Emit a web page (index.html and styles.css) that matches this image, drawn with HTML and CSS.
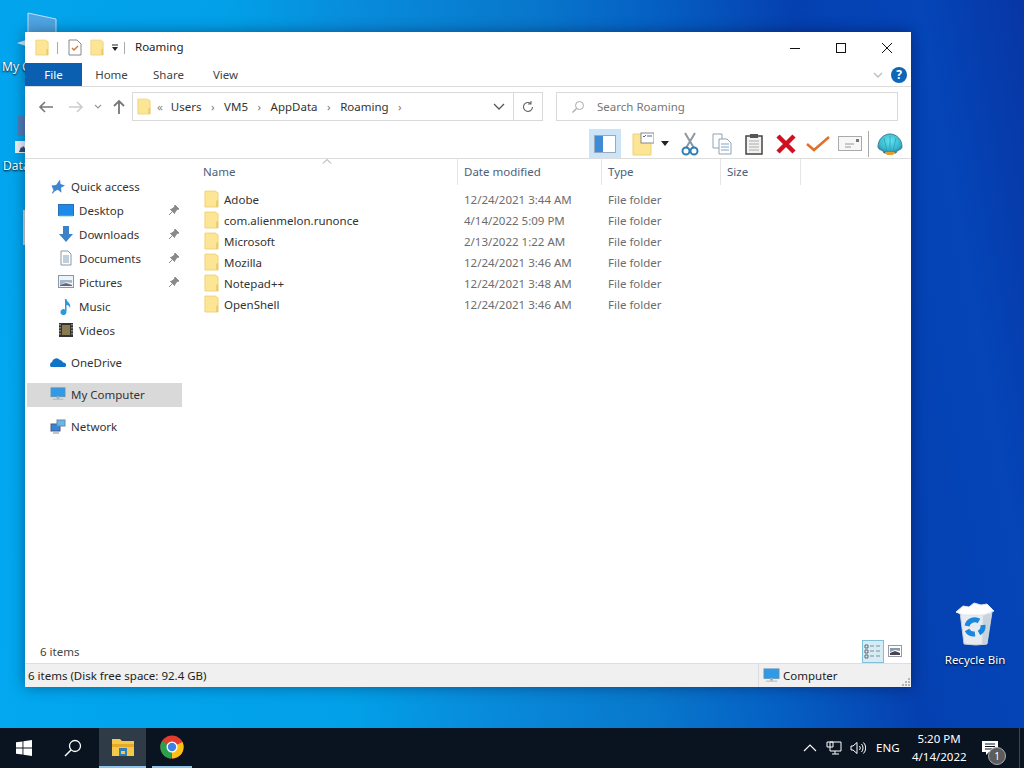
FILE: index.html
```html
<!DOCTYPE html>
<html lang="en">
<head>
  <meta charset="UTF-8">
  <title>Roaming</title>
  <link rel="stylesheet" href="styles.css">
</head>
<body>
  <svg class="defs" width="0" height="0">
    <defs>
      <radialGradient id="shell-fill" cx="50%" cy="35%" r="70%">
        <stop offset="0" stop-color="#5fe6ee"/>
        <stop offset=".7" stop-color="#35b4cc"/>
        <stop offset="1" stop-color="#2a6f92"/>
      </radialGradient>
    </defs>
    <symbol id="folder" viewBox="0 0 16 20">
      <path d="M1 1h11l3 2v15H1z" fill="#fce595" stroke="#efd27a"/>
      <path d="M13 11h2v7h-2z" fill="#ecca6c"/>
    </symbol>
    <symbol id="pin" viewBox="0 0 12 12">
      <path d="M7 1l4 4-2 .5L7 8 6.500 9.500 2.500 5.500 4 5l2.500-2z M4 8l-3 3" fill="#8a8a8a" stroke="#8a8a8a"/>
    </symbol>
    <symbol id="monitor" viewBox="0 0 18 16">
      <rect x="1" y="1" width="16" height="10" fill="#2f9be8" stroke="#5e8fb0"/>
      <path d="M8 11h2v2H8zM3 14h12" fill="#8aa" stroke="#9fb4c2"/>
    </symbol>
  </svg>

  <div class="desk-icon my-computer">
    <svg width="34" height="24" viewBox="0 0 34 24"><path d="M2 2l28 6v16H2z" fill="#4ea6e4" stroke="#bfe0f5"/></svg>
    <span>My C</span>
  </div>
  <svg class="desk-arrow" width="9" height="6" viewBox="0 0 9 6"><path d="M0 3l9-3v6z" fill="#cfe8f8"/></svg>
  <div class="desk-icon data-icon">
    <svg width="11" height="38" viewBox="0 0 11 38"><path d="M3 0h8v20H3z" fill="#7a6aa0" opacity=".65"/><rect x="0" y="25" width="11" height="12" fill="#eef3f8"/><path d="M4 36l2-5 1 1 1-2 3 3v3z" fill="#2a5280"/></svg>
    <span>Data</span>
  </div>
  <div class="desk-edge"></div>
  <div class="desk-icon recycle">
    <svg width="42" height="44" viewBox="0 0 42 44">
      <path d="M2 10l4 0 4 32q12 2 23 0l5-32z" fill="#e6ebf0" stroke="#c3ced8"/>
      <path d="M29 12h8l-4 30-5 1z" fill="#c9d3dc"/>
      <path d="M2 10l7-6 6 1 5-4 7 2 6-1 7 7-10 4H9z" fill="#fff" stroke="#dfe5ea"/>
      <path d="M13 24a8 8 0 0 1 12-5" fill="none" stroke="#1a86dc" stroke-width="5"/>
      <path d="M29 23a8 8 0 0 1-4 8" fill="none" stroke="#1a86dc" stroke-width="5"/>
      <path d="M21 32a8 8 0 0 1-8-4" fill="none" stroke="#1a86dc" stroke-width="5"/>
    </svg>
    <span>Recycle Bin</span>
  </div>

  <div class="window">
    <div class="titlebar">
      <svg class="ic-qa" width="14" height="18"><use href="#folder"/></svg>
      <i class="qa-sep"></i>
      <svg width="14" height="17" viewBox="0 0 14 17" class="ic-props"><path d="M1 1h8l4 4v11H1z" fill="#fff" stroke="#888"/><path d="M4 9l2 2 4-4" fill="none" stroke="#c8743a" stroke-width="1.300"/></svg>
      <svg class="ic-qa2" width="14" height="18"><use href="#folder"/></svg>
      <svg class="qa-drop" width="8" height="8" viewBox="0 0 8 8"><path d="M1 1h6" stroke="#222"/><path d="M1 3h6L4 7z" fill="#222"/></svg>
      <i class="qa-sep"></i>
      <span class="title-text">Roaming</span>
      <div class="win-btns">
        <svg width="12" height="12" viewBox="0 0 12 12"><path d="M1 6.500h10" stroke="#111"/></svg>
        <svg width="12" height="12" viewBox="0 0 12 12"><rect x="1.500" y="1.500" width="9" height="9" fill="none" stroke="#111"/></svg>
        <svg width="12" height="12" viewBox="0 0 12 12"><path d="M1 1l10 10M11 1L1 11" stroke="#111"/></svg>
      </div>
    </div>

    <div class="tabs">
      <div class="tab file">File</div>
      <div class="tab">Home</div>
      <div class="tab">Share</div>
      <div class="tab">View</div>
      <svg class="ribbon-chev" width="12" height="8" viewBox="0 0 12 8"><path d="M2 2l4 4 4-4" fill="none" stroke="#bbb" stroke-width="1.300"/></svg>
      <div class="help">?</div>
    </div>

    <div class="addressrow">
      <svg class="nav-arrow" width="16" height="14" viewBox="0 0 16 14"><path d="M15 7H2M7 2L2 7l5 5" fill="none" stroke="#777" stroke-width="1.600"/></svg>
      <svg class="nav-arrow fwd" width="16" height="14" viewBox="0 0 16 14"><path d="M1 7h13M9 2l5 5-5 5" fill="none" stroke="#ccc" stroke-width="1.600"/></svg>
      <svg class="nav-recent" width="8" height="6" viewBox="0 0 8 6"><path d="M1 1l3 3 3-3" fill="none" stroke="#999" stroke-width="1.200"/></svg>
      <svg class="nav-up" width="14" height="16" viewBox="0 0 14 16"><path d="M7 15V2M2 7l5-5 5 5" fill="none" stroke="#777" stroke-width="1.800"/></svg>
      <div class="addressbox">
        <svg class="addr-folder" width="14" height="18"><use href="#folder"/></svg>
        <span class="crumb-more">&laquo;</span>
        <span class="crumb">Users</span><b class="gt">&rsaquo;</b>
        <span class="crumb">VM5</span><b class="gt">&rsaquo;</b>
        <span class="crumb">AppData</span><b class="gt">&rsaquo;</b>
        <span class="crumb">Roaming</span><b class="gt">&rsaquo;</b>
        <svg class="addr-drop" width="12" height="8" viewBox="0 0 12 8"><path d="M1 1l5 5 5-5" fill="none" stroke="#555" stroke-width="1.300"/></svg>
        <div class="refresh">
          <svg width="14" height="14" viewBox="0 0 14 14"><path d="M11.500 7a4.500 4.500 0 1 1-1.500-3.400M10 1v3H7" fill="none" stroke="#666" stroke-width="1.100"/></svg>
        </div>
      </div>
      <div class="searchbox">
        <svg width="14" height="14" viewBox="0 0 14 14"><circle cx="8.500" cy="5.500" r="4" fill="none" stroke="#aaa"/><path d="M5.500 8.500L1.500 12.500" stroke="#aaa" stroke-width="1.300"/></svg>
        <span>Search Roaming</span>
      </div>
    </div>

    <div class="toolbar">
      <div class="tool pane-btn">
        <svg width="22" height="18" viewBox="0 0 22 18"><rect x=".5" y=".5" width="21" height="17" fill="#fff" stroke="#9ab"/><rect x="1" y="1" width="8" height="16" fill="#3f8bd8"/></svg>
      </div>
      <div class="tool-layout">
        <svg width="22" height="24" viewBox="0 0 22 24"><path d="M1 2h12l6 4v17H1z" fill="#fce595" stroke="#efd27a"/><rect x="9" y="1" width="13" height="10" fill="#fff" stroke="#888"/><path d="M11 4l1 1 2-2M15 4h5" fill="none" stroke="#46a"/></svg>
        <svg width="8" height="5" viewBox="0 0 8 5"><path d="M0 0h8L4 5z" fill="#222"/></svg>
      </div>
      <div class="tool">
        <svg width="18" height="24" viewBox="0 0 18 24"><path d="M4 1l9 15M14 1L5 16" stroke="#8a96a0" stroke-width="2"/><circle cx="5" cy="19" r="3.500" fill="none" stroke="#2d7fb8" stroke-width="2"/><circle cx="13" cy="19" r="3.500" fill="none" stroke="#2d7fb8" stroke-width="2"/></svg>
      </div>
      <div class="tool">
        <svg width="20" height="22" viewBox="0 0 20 22"><path d="M1 1h9v14H1z" fill="#fff" stroke="#8fa3b5"/><path d="M7 6h8l4 4v11H7z" fill="#fff" stroke="#8fa3b5"/><path d="M9 11h8M9 14h8M9 17h8" stroke="#7fa3c5"/></svg>
      </div>
      <div class="tool">
        <svg width="18" height="22" viewBox="0 0 18 22"><rect x="1" y="3" width="16" height="18" fill="#f2f2f0" stroke="#444" stroke-width="1.500"/><rect x="5" y="1" width="8" height="4" fill="#555"/><path d="M4 8h10M4 11h10M4 14h10M4 17h10" stroke="#aaa"/></svg>
      </div>
      <div class="tool">
        <svg width="20" height="20" viewBox="0 0 20 20"><path d="M2 2l16 16M18 2L2 18" stroke="#d01020" stroke-width="4.500"/></svg>
      </div>
      <div class="tool">
        <svg width="24" height="18" viewBox="0 0 24 18"><path d="M1 9l7 6L23 2" fill="none" stroke="#e0702a" stroke-width="2.500"/></svg>
      </div>
      <div class="tool">
        <svg width="24" height="16" viewBox="0 0 24 16"><rect x=".5" y=".5" width="23" height="14" fill="#f7f7f7" stroke="#aaa"/><path d="M7 8h9M7 11h6" stroke="#999"/><rect x="18" y="3" width="3" height="3" fill="#777"/></svg>
      </div>
      <i class="tool-sep"></i>
      <div class="tool">
        <svg width="26" height="22" viewBox="0 0 26 22"><path d="M1 14C1 6 7 1 13 1s12 5 12 13c0 2-3 3-5 4l-1 2H7l-1-2c-2-1-5-2-5-4z" fill="url(#shell-fill)" stroke="#3f7f96"/><path d="M8 19h10l-2 3h-6z" fill="#e0a030"/><path d="M13 3v15M7 5l3 13M19 5l-3 13" fill="none" stroke="#2fa0b8" stroke-width=".8"/></svg>
      </div>
    </div>

    <div class="main">
      <nav class="sidebar">
        <div class="nav-item top"><svg width="15" height="15" viewBox="0 0 15 15"><path d="M9.500 .5l.5 4.500 4.500 1.500-4 2.300 .5 5-3.800-3-3.700 2-1 2-1-1 1.500-2.500L1 6.500l4.600-.5z" fill="#3d86d0"/></svg>Quick access</div>
        <div class="nav-item"><svg width="16" height="13" viewBox="0 0 16 13"><rect x=".5" y=".5" width="15" height="11" fill="#1c8ae8" stroke="#2a6fb0"/><path d="M1 12h14" stroke="#8cb"/></svg>Desktop<svg class="pin" width="12" height="12"><use href="#pin"/></svg></div>
        <div class="nav-item"><svg width="16" height="16" viewBox="0 0 16 16"><path d="M5 0h6v8h4l-7 8-7-8h4z" fill="#3d82c8"/></svg>Downloads<svg class="pin" width="12" height="12"><use href="#pin"/></svg></div>
        <div class="nav-item"><svg width="16" height="16" viewBox="0 0 16 16"><path d="M3 1h7l3 3v11H3z" fill="#fff" stroke="#8898a8"/><path d="M5 6h6M5 8h6M5 10h6M5 12h6" stroke="#7f9fb8"/></svg>Documents<svg class="pin" width="12" height="12"><use href="#pin"/></svg></div>
        <div class="nav-item"><svg width="16" height="14" viewBox="0 0 16 14"><rect x=".5" y=".5" width="15" height="12" fill="#eef3f7" stroke="#8898a8"/><path d="M2 5h12v3L8 7l-6 3z" fill="#9fb8cc"/><path d="M2 10l6-2 6 2v1H2z" fill="#667"/></svg>Pictures<svg class="pin" width="12" height="12"><use href="#pin"/></svg></div>
        <div class="nav-item"><svg width="16" height="17" viewBox="0 0 16 17"><path d="M7 1h1.500c0 3 5 4 3.500 9-.5-2-2-3-3.500-3v7a3 3 0 1 1-1.500-2.500z" fill="#2a9bd8"/></svg>Music</div>
        <div class="nav-item"><svg width="16" height="16" viewBox="0 0 16 16"><rect x="1" y="1" width="14" height="14" fill="#333"/><path d="M4 3h8v10H4z" fill="#8a7a50"/><path d="M2 2v12M14 2v12" stroke="#ccc" stroke-dasharray="1.500 1.500"/></svg>Videos</div>
        <div class="nav-item top gap"><svg width="16" height="11" viewBox="0 0 16 11"><path d="M1 10a3 3 0 0 1 1-5 4.500 4.500 0 0 1 8-2 3.500 3.500 0 0 1 3 2.500A2.500 2.500 0 0 1 15 10z" fill="#0f73c8"/></svg>OneDrive</div>
        <div class="nav-item top gap selected"><svg width="16" height="14"><use href="#monitor"/></svg>My Computer</div>
        <div class="nav-item top gap"><svg width="16" height="16" viewBox="0 0 16 16"><rect x="1" y="6" width="9" height="7" fill="#2f88d0" stroke="#558"/><rect x="7" y="2" width="8" height="6" fill="#68b8e8" stroke="#68a"/><path d="M3 15h6" stroke="#889"/></svg>Network</div>
      </nav>

      <div class="content">
        <div class="list">
          <div class="cols head">
            <div>Name</div>
            <div>Date modified</div>
            <div>Type</div>
            <div>Size</div>
          </div>
          <svg class="sort" width="10" height="5" viewBox="0 0 10 5"><path d="M1 4.500l4-4 4 4" fill="none" stroke="#999"/></svg>
          <div class="rows">
            <div class="cols row"><div class="name"><svg width="15" height="19"><use href="#folder"/></svg>Adobe</div><div>12/24/2021 3:44 AM</div><div>File folder</div></div>
            <div class="cols row"><div class="name"><svg width="15" height="19"><use href="#folder"/></svg>com.alienmelon.runonce</div><div>4/14/2022 5:09 PM</div><div>File folder</div></div>
            <div class="cols row"><div class="name"><svg width="15" height="19"><use href="#folder"/></svg>Microsoft</div><div>2/13/2022 1:22 AM</div><div>File folder</div></div>
            <div class="cols row"><div class="name"><svg width="15" height="19"><use href="#folder"/></svg>Mozilla</div><div>12/24/2021 3:46 AM</div><div>File folder</div></div>
            <div class="cols row"><div class="name"><svg width="15" height="19"><use href="#folder"/></svg>Notepad++</div><div>12/24/2021 3:48 AM</div><div>File folder</div></div>
            <div class="cols row"><div class="name"><svg width="15" height="19"><use href="#folder"/></svg>OpenShell</div><div>12/24/2021 3:46 AM</div><div>File folder</div></div>
          </div>
        </div>
      </div>
    </div>

    <div class="footer">
      <span>6 items</span>
      <div class="view-btn on">
        <svg width="18" height="16" viewBox="0 0 18 16"><path d="M1 2h3v3H1zM1 7h3v3H1zM1 12h3v3H1z" fill="none" stroke="#667"/><path d="M6 3h4M12 3h4M6 8h4M12 8h4M6 13h4M12 13h4" stroke="#889"/></svg>
      </div>
      <svg class="view-large" width="14" height="12" viewBox="0 0 14 12"><rect x=".5" y=".5" width="13" height="11" fill="#fff" stroke="#99a"/><path d="M2 3h10v3l-5-1-5 2z" fill="#89a"/><path d="M2 8l5-2 5 2v2H2z" fill="#445"/></svg>
    </div>

    <div class="statusbar">
      <span>6 items (Disk free space: 92.4 GB)</span>
      <div class="status-comp"><svg width="17" height="15"><use href="#monitor"/></svg>Computer</div>
      <svg class="grip" width="8" height="8" viewBox="0 0 8 8"><path d="M6 0h2v2H6zM3 3h2v2H3zM6 3h2v2H6zM0 6h2v2H0zM3 6h2v2H3zM6 6h2v2H6z" fill="#b5b5b5"/></svg>
    </div>
  </div>

  <div class="taskbar">
    <div class="tb-btn start">
      <svg width="16" height="16" viewBox="0 0 16 16"><path d="M0 2.300L6.500 1.400v6.200H0zM7.400 1.300L16 0v7.600H7.400zM0 8.400h6.500v6.200L0 13.700zM7.400 8.400H16V16l-8.600-1.300z" fill="#fff"/></svg>
    </div>
    <div class="tb-btn search">
      <svg width="18" height="18" viewBox="0 0 18 18"><circle cx="11" cy="7" r="5.500" fill="none" stroke="#fff" stroke-width="1.300"/><path d="M7 11l-6 6" stroke="#fff" stroke-width="1.500"/></svg>
    </div>
    <div class="tb-btn app active">
      <svg width="22" height="18" viewBox="0 0 22 18"><path d="M0 1h8l2 2h12v15H0z" fill="#f4c84a"/><path d="M0 6h22v3H0z" fill="#e5a92c"/><path d="M7 10h8v8H7z" fill="#2f7fb8"/><path d="M9 13h4v3H9z" fill="#f4c84a"/></svg>
    </div>
    <div class="tb-btn app running">
      <svg width="24" height="24" viewBox="0 0 24 24"><circle cx="12" cy="12" r="11.500" fill="#e33b2e"/><path d="M12 12L22.500 7A11.500 11.500 0 0 1 12 23.500z" fill="#fbc116"/><path d="M12 12l-1 11.500A11.500 11.500 0 0 1 2 6z" fill="#2ba14b"/><circle cx="12" cy="12" r="5.500" fill="#fff"/><circle cx="12" cy="12" r="4.200" fill="#3f7fe8"/></svg>
    </div>
    <div class="tray">
      <svg width="14" height="8" viewBox="0 0 14 8"><path d="M1 7l6-6 6 6" fill="none" stroke="#fff" stroke-width="1.100"/></svg>
      <svg class="tray-net" width="16" height="14" viewBox="0 0 16 14"><path d="M4 1h11v9H4zM9 10v3M6 13h7M1 1h6v5H1z" fill="#0b1622" stroke="#fff"/></svg>
      <svg class="tray-vol" width="16" height="14" viewBox="0 0 16 14"><path d="M1 5h2l4-3.500v11L3 9H1zM9.500 5a3 3 0 0 1 0 4M11.500 3a6 6 0 0 1 0 8M13.500 1.500a8 8 0 0 1 0 11" fill="none" stroke="#fff"/></svg>
      <span class="lang">ENG</span>
      <div class="clock"><div>5:20 PM</div><div>4/14/2022</div></div>
      <div class="notif">
        <svg width="18" height="16" viewBox="0 0 18 16"><path d="M1 1h16v11H8l-3 3v-3H1z" fill="#fff"/><path d="M4 4h10M4 6.500h10M4 9h7" stroke="#0b1622"/></svg>
        <span class="badge">1</span>
      </div>
    </div>
    <i class="show-desktop"></i>
  </div>
</body>
</html>
```

FILE: styles.css
```css
html, body {
  height: 100%;
}

body {
  margin: 0;
  width: 1024px;
  height: 768px;
  overflow: hidden;
  position: relative;
  font-family: "Noto Sans", "Open Sans", sans-serif;
  font-size: 11.5px;
  color: #333;
  background: linear-gradient(80deg, #02a8f0 0%, #02a0e8 31%, #088cdc 42%, #0878cc 57%, #0560c4 68%, #0540b0 80%, #0445b8 91%, #0836a4 100%);
}

.defs {
  position: absolute;
}

svg {
  flex: none;
  display: block;
}

/* desktop icons */
.desk-icon {
  position: absolute;
  display: flex;
  flex-direction: column;
  color: #fff;
  text-shadow: 0 1px 2px #000;
  font-size: 12px;
}

.my-computer {
  left: 26px;
  top: 11px;
}

.my-computer span {
  position: absolute;
  left: -24px;
  top: 47px;
  white-space: nowrap;
}

.desk-arrow {
  position: absolute;
  left: 17px;
  top: 40px;
}

.data-icon {
  left: 15px;
  top: 116px;
}

.data-icon span {
  margin-top: 3px;
  margin-left: -12px;
}

.desk-edge {
  position: absolute;
  left: 23px;
  top: 210px;
  width: 2px;
  height: 35px;
  background: #c9d4da;
}

.recycle {
  left: 945px;
  top: 602px;
  width: 60px;
  align-items: center;
}

.recycle span {
  margin-top: 6px;
  white-space: nowrap;
  font-size: 11.5px;
}

/* explorer window */
.window {
  position: absolute;
  left: 25px;
  top: 32px;
  width: 886px;
  height: 655px;
  background: #fff;
  display: flex;
  flex-direction: column;
  box-shadow: 0 0 14px rgba(0, 0, 30, 0.4);
}

.titlebar {
  height: 31px;
  flex: none;
  display: flex;
  align-items: center;
  padding-left: 10px;
  color: #222;
}

.title-text {
  margin-top: -2px;
}

.qa-sep {
  width: 1px;
  height: 12px;
  background: #aaa;
  margin: 0 10px 0 8px;
}

.ic-qa2 {
  margin-left: 8px;
}

.qa-drop {
  margin-left: 7px;
  margin-right: -3px;
}

.win-btns {
  margin-left: auto;
  display: flex;
  gap: 34px;
  padding-right: 18px;
}

.tabs {
  height: 24px;
  flex: none;
  box-sizing: border-box;
  display: flex;
  align-items: center;
  border-bottom: 1px solid #dcdcdc;
  padding-right: 4px;
}

.tab {
  width: 57px;
  text-align: center;
  color: #444;
}

.tab.file {
  width: 57px;
  height: 23px;
  line-height: 23px;
  margin-right: 1px;
  background: #0a5fb0;
  color: #fff;
}

.ribbon-chev {
  margin-left: auto;
  margin-right: 7px;
}

.help {
  width: 16px;
  height: 16px;
  border-radius: 50%;
  background: #0d66b8;
  color: #fff;
  font-weight: 700;
  font-size: 12px;
  line-height: 16px;
  text-align: center;
}

.addressrow {
  height: 42px;
  flex: none;
  display: flex;
  align-items: center;
  padding-left: 13px;
  padding-bottom: 3px;
  box-sizing: border-box;
}

.nav-arrow.fwd {
  margin-left: 14px;
}

.nav-recent {
  margin-left: 10px;
}

.nav-up {
  margin-left: 10px;
}

.addressbox {
  margin-left: 6px;
  width: 411px;
  height: 29px;
  box-sizing: border-box;
  border: 1px solid #d9d9d9;
  display: flex;
  align-items: center;
  padding-left: 4px;
  color: #333;
}

.crumb-more {
  margin: 0 8px 0 6px;
  color: #888;
}

.gt {
  margin: 0 9.500px;
  color: #777;
  font-weight: 400;
}

.addr-drop {
  margin-left: auto;
  margin-right: 8px;
}

.refresh {
  height: 100%;
  width: 28px;
  border-left: 1px solid #d9d9d9;
  display: flex;
  align-items: center;
  justify-content: center;
}

.searchbox {
  margin-left: 13px;
  width: 342px;
  height: 29px;
  box-sizing: border-box;
  border: 1px solid #d9d9d9;
  display: flex;
  align-items: center;
  gap: 12px;
  padding-left: 14px;
  color: #777;
}

.toolbar {
  height: 30px;
  flex: none;
  display: flex;
  align-items: center;
  justify-content: flex-end;
  padding-right: 5px;
  box-sizing: border-box;
  border-bottom: 1px solid #dcdcdc;
}

.tool {
  width: 32px;
  height: 29px;
  display: flex;
  align-items: center;
  justify-content: center;
}

.pane-btn {
  background: #cce4f7;
  margin-right: 5px;
}

.tool-layout {
  width: 48px;
  box-sizing: border-box;
  padding-left: 6px;
  display: flex;
  align-items: center;
  gap: 7px;
}

.tool-sep {
  width: 1px;
  height: 26px;
  background: #aaa;
  margin: 0 5px 0 2px;
}

.main {
  flex: 1;
  display: flex;
  min-height: 0;
}

.sidebar {
  width: 158px;
  flex: none;
  padding-top: 16px;
  box-sizing: border-box;
  color: #333;
}

.nav-item {
  height: 24px;
  box-sizing: border-box;
  display: flex;
  align-items: center;
  gap: 5px;
  padding-left: 33px;
  padding-right: 3px;
  padding-bottom: 2px;
}

.nav-item svg:first-child {
  width: 16px;
}

.nav-item.top {
  padding-left: 25px;
}

.nav-item.gap {
  margin-top: 8px;
}

.nav-item.selected {
  background: #d9d9d9;
  margin-left: 2px;
  margin-right: 1px;
  padding-left: 23px;
}

.pin {
  margin-left: auto;
}

.content {
  flex: 1;
  min-width: 0;
}

.list {
  position: relative;
}

.cols {
  display: grid;
  grid-template-columns: 255px 144px 119px 80px;
  padding-left: 20px;
}

.head {
  height: 26px;
  color: #4c607a;
}

.head div {
  display: flex;
  align-items: center;
  border-right: 1px solid #e5e5e5;
  padding-bottom: 2px;
}

.head div + div {
  padding-left: 6px;
}

.sort {
  position: absolute;
  left: 139px;
  top: 0;
}

.rows {
  padding-top: 5px;
}

.row {
  height: 21px;
  box-sizing: border-box;
  padding-bottom: 2px;
  align-items: center;
  color: #6d6d6d;
}

.row div + div {
  padding-left: 6px;
}

.row .name {
  display: flex;
  align-items: center;
  gap: 5px;
  padding-left: 1px;
  color: #333;
}

.footer {
  height: 24px;
  flex: none;
  display: flex;
  align-items: center;
  padding-left: 15px;
  padding-right: 9px;
  box-sizing: border-box;
  color: #444;
}

.view-btn {
  margin-left: auto;
  width: 22px;
  height: 23px;
  box-sizing: border-box;
  background: #d5ecf5;
  border: 1px solid #7fc0d8;
  display: flex;
  align-items: center;
  justify-content: center;
}

.view-large {
  margin-left: 4px;
}

.statusbar {
  height: 24px;
  flex: none;
  background: #f0f0f0;
  border-top: 1px solid #dedede;
  box-sizing: border-box;
  display: flex;
  align-items: center;
  padding-left: 3px;
  color: #222;
}

.status-comp {
  margin-left: auto;
  width: 153px;
  height: 100%;
  box-sizing: border-box;
  border-left: 1px solid #ddd;
  display: flex;
  align-items: center;
  gap: 3px;
  padding-left: 4px;
}

.grip {
  position: absolute;
  right: 1px;
  bottom: 1px;
}

/* taskbar */
.taskbar {
  position: absolute;
  left: 0;
  bottom: 0;
  width: 1024px;
  height: 40px;
  background: #0a1420;
  display: flex;
  color: #fff;
}

.tb-btn {
  height: 40px;
  box-sizing: border-box;
  display: flex;
  align-items: center;
  justify-content: center;
}

.start {
  width: 48px;
}

.search {
  width: 50px;
}

.app {
  width: 47px;
  border-bottom: 2px solid transparent;
}

.active {
  margin-left: 1px;
  background: #2f3c48;
  border-bottom-color: #8fc4ea;
}

.running {
  margin-left: 6px;
  width: 40px;
  border-bottom-color: #8fc4ea;
}

.tray {
  position: absolute;
  right: 23px;
  top: 0;
  height: 40px;
  display: flex;
  align-items: center;
}

.tray-net {
  margin-left: 9px;
}

.tray-vol {
  margin-left: 8px;
}

.lang {
  margin-left: 10px;
  margin-top: -2px;
  width: 24px;
  font-size: 11.5px;
}

.clock {
  width: 54px;
  margin-left: 12px;
  text-align: center;
  line-height: 18px;
}

.notif {
  position: relative;
  margin-left: 15px;
  margin-right: 2px;
}

.badge {
  position: absolute;
  right: -7px;
  bottom: -9px;
  width: 16px;
  height: 16px;
  border-radius: 50%;
  background: #5c5c5c;
  border: 1px solid #aaa;
  font-size: 10px;
  line-height: 16px;
  text-align: center;
}

.show-desktop {
  position: absolute;
  right: 4px;
  top: 0;
  width: 1px;
  height: 40px;
  background: #3c4650;
}
```
